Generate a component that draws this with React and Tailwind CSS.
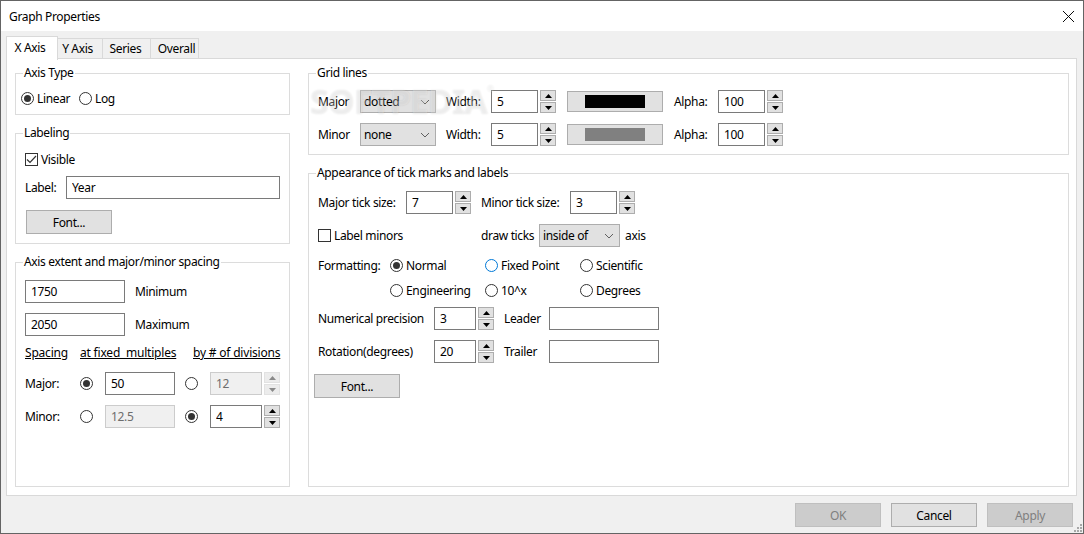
import { X } from 'lucide-react'

const FONT = { fontFamily: '"Noto Sans", "Liberation Sans", sans-serif' }

function Arrow({ up, disabled }) {
  return (
    <svg width="7" height="4" viewBox="0 0 7 4" className={disabled ? 'fill-[#8a8a8a]' : 'fill-black'}>
      <polygon points={up ? '3.5,0 7,4 0,4' : '0,0 7,0 3.5,4'} />
    </svg>
  )
}

function Spinner({ disabled }) {
  const cls = `h-[11px] flex items-center justify-center border ${disabled ? 'bg-[#ececec] border-[#e2e2e2]' : 'bg-[#e1e1e1] border-[#adadad]'}`
  return (
    <div className="ml-[2px] w-[16px] h-[23px] flex flex-col justify-between shrink-0">
      <div className={cls}><Arrow up disabled={disabled} /></div>
      <div className={cls}><Arrow disabled={disabled} /></div>
    </div>
  )
}

function Field({ value = '', width, disabled }) {
  return (
    <input
      readOnly
      value={value}
      style={{ width }}
      className={`h-[23px] px-[5px] outline-none shrink-0 border ${disabled ? 'bg-[#f0f0f0] border-[#cccccc] text-[#6d6d6d]' : 'bg-white border-[#7a7a7a] text-black'}`}
    />
  )
}

function SpinField({ value, width, disabled }) {
  return (
    <div className="flex shrink-0">
      <Field value={value} width={width} disabled={disabled} />
      <Spinner disabled={disabled} />
    </div>
  )
}

function Radio({ checked, focused }) {
  return (
    <span className={`w-[13px] h-[13px] rounded-full border flex items-center justify-center shrink-0 ${focused ? 'border-[#0078d7]' : 'border-[#333333]'}`}>
      {checked && <span className="w-[7px] h-[7px] rounded-full bg-[#333333]" />}
    </span>
  )
}

function RadioLabel({ label, checked, focused, width }) {
  return (
    <label className="flex items-center gap-[3px] h-[16px]" style={{ width }}>
      <Radio checked={checked} focused={focused} />
      <span>{label}</span>
    </label>
  )
}

function Check({ checked, label }) {
  return (
    <label className="flex items-center gap-[3px] h-[16px]">
      <span className="w-[13px] h-[13px] border border-[#333333] flex items-center justify-center">
        {checked && (
          <svg width="11" height="9" viewBox="0 0 11 9" fill="none" stroke="#333333" strokeWidth="1.2">
            <path d="M1 4.5 L4 7.5 L10 1" />
          </svg>
        )}
      </span>
      <span>{label}</span>
    </label>
  )
}

function Btn({ children, className = '' }) {
  return (
    <button className={`w-[86px] h-[24px] bg-[#e1e1e1] border border-[#adadad] text-black ${className}`}>
      {children}
    </button>
  )
}

function Dropdown({ value, width }) {
  return (
    <div className="h-[23px] bg-[#e1e1e1] border border-[#adadad] flex items-center justify-between pl-[3px] pr-[5px] shrink-0" style={{ width }}>
      <span>{value}</span>
      <svg width="10" height="6" viewBox="0 0 10 6" fill="none" stroke="#606060">
        <path d="M1 1 L5 5 L9 1" />
      </svg>
    </div>
  )
}

function Swatch({ color }) {
  return (
    <div className="ml-[11px] w-[96px] h-[21px] bg-[#e1e1e1] border border-[#adadad] flex items-center justify-center shrink-0">
      <div className="w-[60px] h-[13px]" style={{ background: color }} />
    </div>
  )
}

function Group({ title, className = '', children }) {
  return (
    <fieldset className={`border border-[#dcdcdc] ${className}`}>
      <legend className="ml-[7px] px-[1px] h-[16px] leading-[15px]">{title}</legend>
      {children}
    </fieldset>
  )
}

function GridRow({ label, line, color, className = '' }) {
  return (
    <div className={`flex items-center h-[23px] ${className}`}>
      <span className="w-[42px]">{label}</span>
      <Dropdown value={line} width={76} />
      <span className="ml-[10px] w-[45px]">Width:</span>
      <SpinField value="5" width={47} />
      <Swatch color={color} />
      <span className="ml-[11px] w-[44px]">Alpha:</span>
      <SpinField value="100" width={47} />
    </div>
  )
}

export default function App() {
  return (
    <div style={FONT} className="relative w-[1084px] h-[534px] border border-[#646464] bg-[#f0f0f0] text-[12px] leading-[15px] tracking-[-0.35px] text-black flex flex-col overflow-hidden">
      {/* Title bar */}
      <div className="h-[30px] bg-white flex items-center justify-between pl-[8px] pr-[4px] shrink-0">
        <span>Graph Properties</span>
        <X size={21} strokeWidth={1.1} />
      </div>

      {/* Tabs */}
      <div className="flex items-end h-[28px] pl-[5px] shrink-0">
        <div className="relative z-10 -mb-[1px] w-[52px] h-[24px] bg-white border border-b-0 border-[#d9d9d9] flex items-center justify-center pb-[2px] pr-[4px]">X Axis</div>
        <div className="w-[45px] h-[21px] border border-l-0 border-[#d9d9d9] flex items-center justify-center pr-[5px]">Y Axis</div>
        <div className="w-[48px] h-[21px] border border-l-0 border-[#d9d9d9] flex items-center justify-center pr-[2px]">Series</div>
        <div className="w-[48px] h-[21px] border border-l-0 border-[#d9d9d9] flex items-center justify-center pl-[4px]">Overall</div>
      </div>

      {/* Tab page */}
      <div className="relative ml-[5px] w-[1071px] h-[438px] -mt-[1px] bg-white border border-[#d9d9d9] pt-[6px] pl-[8px] flex gap-[18px] shrink-0">
        <div className="w-[275px] flex flex-col gap-[10px]">
          <Group title="Axis Type" className="h-[50px]">
            <div className="mt-[9px] pl-[5px] flex">
              <RadioLabel label="Linear" checked width={58} />
              <RadioLabel label="Log" />
            </div>
          </Group>

          <Group title="Labeling" className="h-[119px]">
            <div className="pl-[9px]">
              <div className="mt-[10px]"><Check checked label="Visible" /></div>
              <div className="mt-[9px] flex items-center">
                <span className="w-[41px]">Label:</span>
                <Field value="Year" width={214} />
              </div>
              <Btn className="block mt-[11px] ml-[1px]">Font...</Btn>
            </div>
          </Group>

          <Group title="Axis extent and major/minor spacing" className="h-[233px]">
            <div className="pl-[9px]">
              <div className="mt-[10px] flex items-center gap-[10px]">
                <Field value="1750" width={100} />
                <span>Minimum</span>
              </div>
              <div className="mt-[10px] flex items-center gap-[10px]">
                <Field value="2050" width={100} />
                <span>Maximum</span>
              </div>
              <div className="mt-[9px] h-[16px] flex underline whitespace-pre tracking-[-0.2px]">
                <span className="w-[55px]">Spacing</span>
                <span className="w-[113px]">at fixed  multiples</span>
                <span>by # of divisions</span>
              </div>
              <div className="mt-[11px] flex items-center h-[23px]">
                <span className="w-[55px]">Major:</span>
                <Radio checked />
                <span className="w-[12px]" />
                <Field value="50" width={70} />
                <span className="w-[10px]" />
                <Radio />
                <span className="w-[12px]" />
                <SpinField value="12" width={52} disabled />
              </div>
              <div className="mt-[10px] flex items-center h-[23px]">
                <span className="w-[55px]">Minor:</span>
                <Radio />
                <span className="w-[12px]" />
                <Field value="12.5" width={70} disabled />
                <span className="w-[10px]" />
                <Radio checked />
                <span className="w-[12px]" />
                <SpinField value="4" width={52} />
              </div>
            </div>
          </Group>
        </div>

        <div className="w-[761px] flex flex-col gap-[10px]">
          <Group title="Grid lines" className="h-[90px]">
            <div className="pl-[9px]">
              <GridRow label="Major" line="dotted" color="#000000" className="mt-[9px]" />
              <GridRow label="Minor" line="none" color="#808080" className="mt-[10px]" />
            </div>
          </Group>

          <Group title="Appearance of tick marks and labels" className="h-[322px]">
            <div className="pl-[9px]">
              <div className="mt-[10px] flex items-center h-[23px]">
                <span className="w-[88px]">Major tick size:</span>
                <SpinField value="7" width={47} />
                <span className="ml-[10px] w-[89px]">Minor tick size:</span>
                <SpinField value="3" width={47} />
              </div>
              <div className="mt-[10px] flex items-center h-[23px]">
                <div className="w-[163px]"><Check label="Label minors" /></div>
                <span className="w-[58px]">draw ticks</span>
                <Dropdown value="inside of" width={81} />
                <span className="ml-[5px]">axis</span>
              </div>
              <div className="mt-[10px] h-[16px] flex items-center">
                <span className="w-[72px]">Formatting:</span>
                <RadioLabel label="Normal" checked width={95} />
                <RadioLabel label="Fixed Point" focused width={95} />
                <RadioLabel label="Scientific" />
              </div>
              <div className="mt-[9px] flex items-center pl-[72px]">
                <RadioLabel label="Engineering" width={95} />
                <RadioLabel label="10^x" width={95} />
                <RadioLabel label="Degrees" />
              </div>
              <div className="mt-[9px] flex items-center h-[23px]">
                <span className="w-[116px]">Numerical precision</span>
                <SpinField value="3" width={42} />
                <span className="ml-[10px] w-[45px]">Leader</span>
                <Field width={110} />
              </div>
              <div className="mt-[10px] flex items-center h-[23px]">
                <span className="w-[116px]">Rotation(degrees)</span>
                <SpinField value="20" width={42} />
                <span className="ml-[10px] w-[45px]">Trailer</span>
                <Field width={110} />
              </div>
              <Btn className="block mt-[11px] -ml-[4px]">Font...</Btn>
            </div>
          </Group>
        </div>

        {/* Watermark */}
        <span className="absolute left-[303px] top-[22px] text-[34px] leading-[40px] font-bold tracking-[-1px] text-white/30 [text-shadow:0_0_2px_rgba(0,0,0,0.1)] pointer-events-none">
          SOFTPEDIA<span className="align-top text-[9px] leading-[16px] font-normal tracking-normal">®</span>
        </span>
      </div>

      {/* Footer */}
      <div className="flex justify-end gap-[10px] pt-[7px] pr-[10px]">
        <Btn className="!bg-[#cccccc] !border-[#bfbfbf] !text-[#7f7f7f]">OK</Btn>
        <Btn>Cancel</Btn>
        <Btn className="!bg-[#cccccc] !border-[#bfbfbf] !text-[#7f7f7f]">Apply</Btn>
      </div>

      {/* Resize grip */}
      <svg className="absolute right-0 bottom-0" width="10" height="10" viewBox="0 0 10 10" fill="#a8a8a8">
        <rect x="7" y="1" width="2" height="2" />
        <rect x="4" y="4" width="2" height="2" />
        <rect x="7" y="4" width="2" height="2" />
        <rect x="1" y="7" width="2" height="2" />
        <rect x="4" y="7" width="2" height="2" />
        <rect x="7" y="7" width="2" height="2" />
      </svg>
    </div>
  )
}
